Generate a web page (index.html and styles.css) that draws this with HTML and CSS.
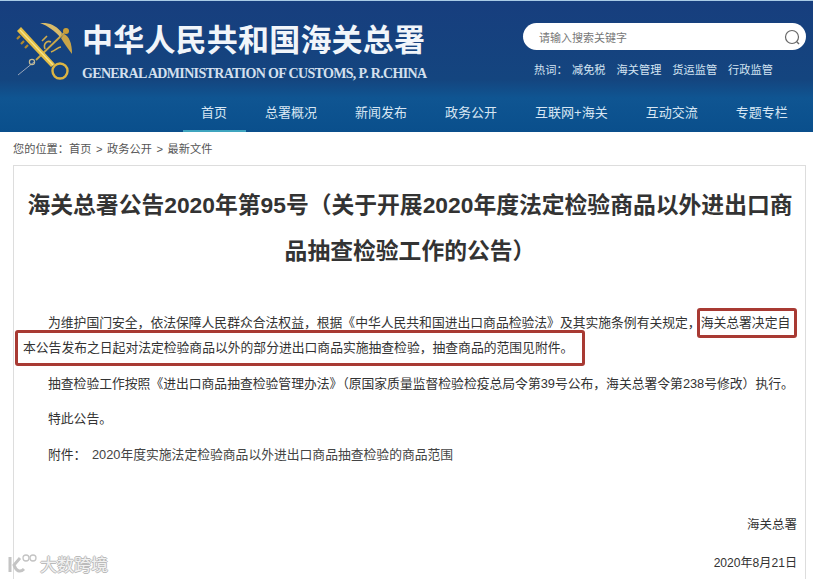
FILE: index.html
```html
<!DOCTYPE html>
<html lang="zh-CN">
<head>
    <meta charset="UTF-8">
    <meta name="viewport" content="width=device-width, initial-scale=1.0">
    <title>海关总署公告2020年第95号</title>
    <link rel="stylesheet" href="styles.css">
</head>
<body>
    <header class="site-header">
        <div class="header-top">
            <div class="brand">
                <!-- Customs emblem: key crossed with a winged staff -->
                <svg class="emblem" width="62" height="62" viewBox="0 0 62 62" fill="none">
                    <path d="M4 52 L20 39" stroke="#9aa6ba" stroke-width="1"/>
                    <path d="M22 37 L50 10" stroke="#c9a84a" stroke-width="1.8"/>
                    <circle cx="18" cy="39" r="2.6" stroke="#c4bb94" stroke-width="1.2"/>
                    <path d="M31 26 C29 21 33 17 37 19 M37 29 C42 27 44 24 47 24 M28 18 L33 13" stroke="#d1ad4c" stroke-width="1.6"/>
                    <path d="M26 0 C35 -1 43 3 48 10 L46 14 C41 8 34 3 26 0Z" fill="#d8bb6a"/>
                    <path d="M50 11 C55 13 58 20 58 31 C54 26 50 20 47 15Z" fill="#c9a548"/>
                    <circle cx="52" cy="8" r="3" fill="#c99f38"/>
                    <path d="M3 8 L7 4 L41 41 L37 44Z" fill="#e3bd45"/>
                    <path d="M6 7 L39 42" stroke="#f7e58d" stroke-width="1.2"/>
                    <path d="M6 13 L3 16 M10 18 L7 21 M14 22 L11 25" stroke="#b08a2d" stroke-width="2.2"/>
                    <circle cx="46" cy="48" r="7.5" stroke="#dcb543" stroke-width="2.4"/>
                </svg>
                <div class="brand-text">
                    <div class="brand-cn">中华人民共和国海关总署</div>
                    <div class="brand-en">GENERAL ADMINISTRATION OF CUSTOMS, P. R.CHINA</div>
                </div>
            </div>
            <div class="search-area">
                <div class="search-box">
                    <span class="search-hint">请输入搜索关键字</span>
                    <svg width="18" height="18" viewBox="0 0 18 18" fill="none">
                        <circle cx="9" cy="9" r="6.5" stroke="#666" stroke-width="1.2"/>
                        <path d="M13.8 13.8 L16 16" stroke="#666" stroke-width="1.4"/>
                    </svg>
                </div>
                <div class="hot-words">
                    <span class="hot-label">热词：</span>
                    <a>减免税</a>
                    <a>海关管理</a>
                    <a>货运监管</a>
                    <a>行政监管</a>
                </div>
            </div>
        </div>
        <nav class="main-nav">
            <a class="active">首页</a>
            <a>总署概况</a>
            <a>新闻发布</a>
            <a>政务公开</a>
            <a>互联网+海关</a>
            <a>互动交流</a>
            <a>专题专栏</a>
        </nav>
    </header>

    <div class="breadcrumb">您的位置：首页 &gt; 政务公开 &gt; 最新文件</div>

    <main class="notice">
        <h1>海关总署公告2020年第95号（关于开展2020年度法定检验商品以外进出口商<br>品抽查检验工作的公告）</h1>
        <div class="notice-body">
            <p class="indent">为维护国门安全，依法保障人民群众合法权益，根据《中华人民共和国进出口商品检验法》及其实施条例有关规定，海关总署决定自本公告发布之日起对法定检验商品以外的部分进出口商品实施抽查检验，抽查商品的范围见附件。</p>
            <p class="indent">抽查检验工作按照《进出口商品抽查检验管理办法》（原国家质量监督检验检疫总局令第39号公布，海关总署令第238号修改）执行。</p>
            <p class="indent">特此公告。</p>
            <p class="indent attach">附件： <span>2020年度实施法定检验商品以外进出口商品抽查检验的商品范围</span></p>
        </div>
        <div class="signature">海关总署</div>
        <div class="date">2020年8月21日</div>
    </main>

    <!-- red boxes drawn over the text -->
    <div class="mark mark-one"></div>
    <div class="mark mark-two"></div>

    <div class="watermark">
        <svg width="30" height="24" viewBox="0 0 30 24" fill="none">
            <path d="M3 5 V20 M13 6 L7 13 C9 19 13 21 17 17" stroke="#c4c4c4" stroke-width="3"/>
            <circle cx="19" cy="6" r="3" stroke="#c4c4c4" stroke-width="1.3"/>
            <circle cx="26" cy="6" r="3" stroke="#c4c4c4" stroke-width="1.3"/>
        </svg>
        <span>大数跨境</span>
    </div>
</body>
</html>
```

FILE: styles.css
```css
html, body {
    margin: 0;
    height: 579px;
    overflow: hidden;
}

body {
    font-family: "Liberation Sans", "Noto Sans CJK SC", sans-serif;
    background-color: #fff;
    color: #333;
    position: relative;
}

/* Header */
.site-header {
    width: 813px;
    height: 132px;
    border-top: 1px solid #a9cbe6;
    box-sizing: border-box;
    background: linear-gradient(to bottom, #173e7e 0, #14457f 60%, #0f5592 74%, #0a4f8c 100%);
}

.header-top {
    height: 91px;
    padding-right: 7px;
    display: flex;
    justify-content: space-between;
}

.brand {
    display: flex;
    padding: 21px 0 0 14px;
    gap: 6px;
}

.emblem {
    margin-top: 1px;
}

.brand-cn {
    font-size: 31px;
    font-weight: 700;
    line-height: 38px;
    letter-spacing: 0.2px;
    color: #f1f5fa;
}

.brand-en {
    font-family: "Liberation Serif", serif;
    font-size: 14px;
    font-weight: 700;
    line-height: 18px;
    margin-top: 5px;
    letter-spacing: -0.66px;
    color: #d5e0ee;
    white-space: nowrap;
}

.search-area {
    width: 283px;
    margin-top: 22px;
}

.search-box {
    height: 27px;
    padding: 0 5px 0 16px;
    display: flex;
    align-items: center;
    justify-content: space-between;
    background-color: #fff;
    border-radius: 14px;
}

.search-hint {
    font-size: 11px;
    color: #777;
}

.hot-words {
    display: flex;
    margin-top: 13px;
    padding-left: 11px;
    gap: 11px;
    font-size: 11.2px;
    line-height: 14px;
    color: #d4e4f2;
}

.hot-label {
    margin-right: -6.6px;
}

.main-nav {
    height: 40px;
    padding-left: 201px;
    display: flex;
    gap: 38px;
    font-size: 13px;
    line-height: 42px;
    color: #d7e6f3;
}

.main-nav a {
    position: relative;
    white-space: nowrap;
}

.main-nav a.active::after {
    content: "";
    position: absolute;
    left: -18px;
    right: -19px;
    bottom: 0;
    height: 2px;
    background-color: #3fa5bf;
}

/* Breadcrumb */
.breadcrumb {
    height: 33px;
    padding-left: 13px;
    font-size: 11.2px;
    word-spacing: 1.5px;
    line-height: 34px;
    color: #555;
}

/* Notice card */
.notice {
    width: 793px;
    height: 414px;
    margin-left: 13px;
    box-sizing: border-box;
    padding: 16px 10px 0 9px;
    border: 1px solid #ddd;
    border-bottom: none;
}

.notice h1 {
    margin: 0 -2px 0 0;
    font-size: 22.8px;
    font-weight: 700;
    line-height: 46px;
    text-align: center;
    white-space: nowrap;
    color: #333;
}

.notice-body {
    margin-top: 36px;
    font-size: 12.8px;
    line-height: 25px;
    color: #333;
}

.notice-body p {
    margin: 0 0 10.5px;
}

.indent {
    text-indent: 25px;
}

.attach span {
    margin-left: 2px;
    color: #444;
}

.signature,
.date {
    margin-right: -2px;
    line-height: 25px;
    text-align: right;
    color: #333;
}

.signature {
    font-size: 12.5px;
    margin-top: 46px;
}

.date {
    font-size: 12.1px;
    margin-top: 13px;
}

/* Annotations */
.mark {
    position: absolute;
    box-sizing: border-box;
    border: 3px solid #a83a33;
    border-radius: 3px;
}

.mark-one {
    left: 697px;
    top: 308px;
    width: 100px;
    height: 30px;
}

.mark-two {
    left: 15px;
    top: 330px;
    width: 570px;
    height: 36px;
}

.watermark {
    position: absolute;
    left: 7px;
    top: 551px;
    display: flex;
    align-items: center;
    gap: 3px;
    font-size: 17px;
    color: #f2f2f2;
    text-shadow: 1px 0 #bbb, -1px 0 #bbb, 0 1px #bbb, 0 -1px #bbb;
}
```
